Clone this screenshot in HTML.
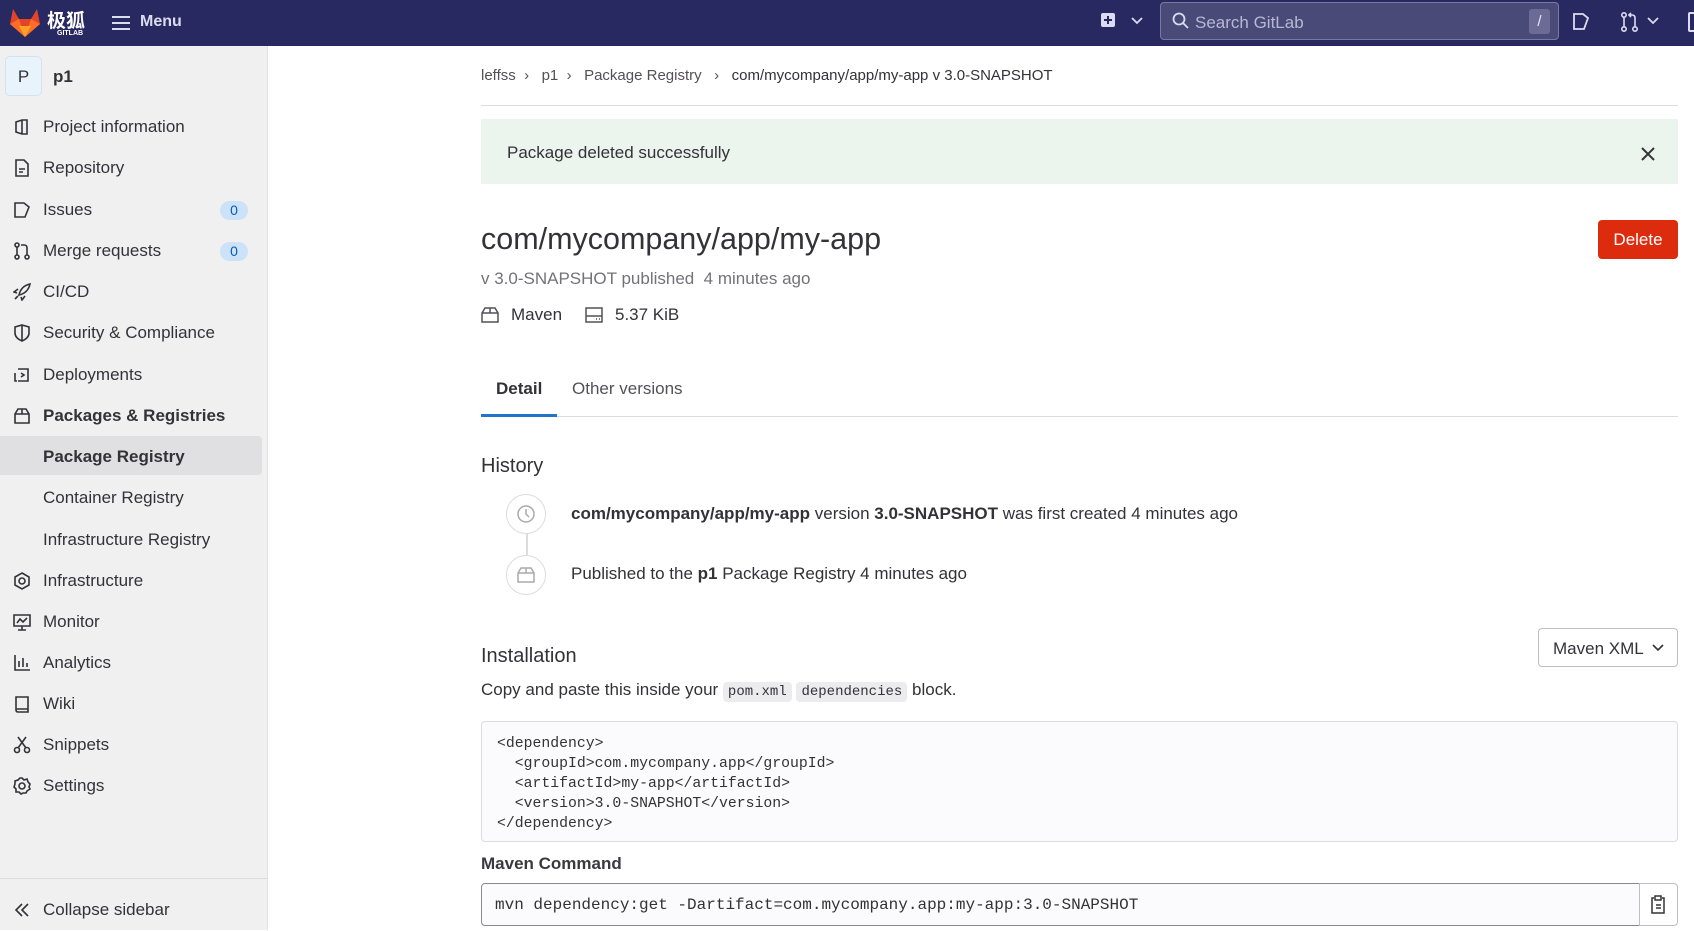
<!DOCTYPE html>
<html><head><meta charset="utf-8"><style>
*{box-sizing:border-box;margin:0;padding:0}
body{width:1694px;height:930px;overflow:hidden;background:#fff;font-family:"Liberation Sans","Noto Sans CJK SC",sans-serif;color:#333238;position:relative;font-size:17px}
.a{position:absolute;white-space:nowrap}
.hdr{position:absolute;left:0;top:0;width:1694px;height:46px;background:#292961}
.sb{position:absolute;left:0;top:46px;width:268px;height:884px;background:#f0f0f0;border-right:1px solid #e3e3e3}
.ni{position:absolute;left:0;width:268px;height:40px;line-height:42px}
.ni svg{position:absolute;left:13px;top:12px}
.ni span{position:absolute;left:43px}
.badge{position:absolute;left:220px;top:12px;width:28px;height:19px;border-radius:10px;background:#cbe2f9;color:#0b5cad;font-size:14px;line-height:19px;text-align:center}
.mono{font-family:"Liberation Mono",monospace}
.ic{fill:none;stroke:#333238;stroke-width:1.6}
</style></head><body>
<div class="hdr">
  <svg class="a" style="left:8px;top:6px" width="34" height="32" viewBox="0 0 34 32"><path d="M17 31 L2 18 L5 3 L11 13 L23 13 L29 3 L32 18 Z" fill="#e24329"/><path d="M17 31 L2 18 L11 13Z" fill="#fc6d26"/><path d="M17 31 L32 18 L23 13Z" fill="#fc6d26"/><path d="M17 31 L11 20 L23 20Z" fill="#fca326"/></svg>
  <div class="a" style="left:47px;top:6px;color:#fff;font-size:19px;font-weight:bold;font-family:'Noto Sans CJK SC',sans-serif">极狐</div>
  <div class="a" style="left:57px;top:30px;color:#fff;font-size:7px;font-weight:bold">GITLAB</div>
  <svg class="a" style="left:111px;top:14px" width="20" height="18"><path d="M1 3H19M1 9H19M1 15H19" stroke="#dcdcf0" stroke-width="2"/></svg>
  <div class="a" style="left:140px;top:13px;color:#dcdcf0;font-size:16px;font-weight:bold">Menu</div>
  <svg class="a" style="left:1100px;top:12px" width="16" height="16"><rect x="1" y="1" width="14" height="14" rx="2" fill="#dcdcf0"/><path d="M8 4V12M4 8H12" stroke="#292961" stroke-width="2"/></svg>
  <svg class="a" style="left:1131px;top:17px" width="12" height="8"><path d="M1 1L6 6L11 1" stroke="#dcdcf0" stroke-width="1.8" fill="none"/></svg>
  <div class="a" style="left:1160px;top:2px;width:399px;height:38px;background:#4a4a78;border:1px solid #7a7aa0;border-radius:4px"></div>
  <svg class="a" style="left:1172px;top:12px" width="18" height="18"><circle cx="7" cy="7" r="5.5" stroke="#dcdcf0" stroke-width="1.8" fill="none"/><path d="M11 11L16 16" stroke="#dcdcf0" stroke-width="1.8"/></svg>
  <div class="a" style="left:1195px;top:13px;color:#b8b8d4;font-size:17px">Search GitLab</div>
  <div class="a" style="left:1529px;top:9px;width:21px;height:25px;background:#6b6b95;border-radius:3px;color:#e8e8ff;font-size:15px;text-align:center;line-height:25px">/</div>
  <svg class="a" style="left:1572px;top:12px" width="20" height="20"><path d="M2 2H11L16 6L12 17H2Z" stroke="#dcdcf0" stroke-width="1.8" fill="none"/></svg>
  <svg class="a" style="left:1620px;top:11px" width="20" height="22"><circle cx="4" cy="4" r="2.2" stroke="#dcdcf0" stroke-width="1.6" fill="none"/><circle cx="4" cy="18" r="2.2" stroke="#dcdcf0" stroke-width="1.6" fill="none"/><circle cx="15" cy="18" r="2.2" stroke="#dcdcf0" stroke-width="1.6" fill="none"/><path d="M4 6V16M15 16V7Q15 4 12 4H9M11 2L9 4L11 6" stroke="#dcdcf0" stroke-width="1.6" fill="none"/></svg>
  <svg class="a" style="left:1647px;top:17px" width="12" height="8"><path d="M1 1L6 6L11 1" stroke="#dcdcf0" stroke-width="1.8" fill="none"/></svg>
  <div class="a" style="left:1688px;top:12px;width:10px;height:20px;border:2px solid #dcdcf0;border-radius:2px"></div>
</div>

<div class="sb">
  <div class="a" style="left:5px;top:10px;width:37px;height:40px;background:#e9f3fc;border:1px solid #d5e3f0;border-radius:5px;text-align:center;line-height:40px;font-size:17px">P</div>
  <div class="a" style="left:53px;top:21px;font-size:17px;font-weight:bold">p1</div>
  <div class="ni" style="top:60px"><svg width="18" height="18" class="ic"><path d="M3 4L9 2H14V16H9L3 14Z M9 2V16"/></svg><span>Project information</span></div>
  <div class="ni" style="top:101px"><svg width="18" height="18" class="ic"><path d="M3 1H11L15 5V17H3Z M6 10H12M6 13H10"/></svg><span>Repository</span></div>
  <div class="ni" style="top:143px"><svg width="18" height="18" class="ic"><path d="M2 2H11L16 6L12 16H2Z"/></svg><span>Issues</span><div class="badge">0</div></div>
  <div class="ni" style="top:184px"><svg width="18" height="18" class="ic"><circle cx="4" cy="3" r="2"/><circle cx="4" cy="15" r="2"/><circle cx="14" cy="15" r="2"/><path d="M4 5V13M14 13V6Q14 3 11 3H8"/></svg><span>Merge requests</span><div class="badge">0</div></div>
  <div class="ni" style="top:225px"><svg width="18" height="18" class="ic"><path d="M6 12Q8 3 17 1Q15 10 6 12ZM4 10L1 9L5 6M8 14L9 17L12 13M5 13L2 16"/></svg><span>CI/CD</span></div>
  <div class="ni" style="top:266px"><svg width="18" height="18" class="ic"><path d="M9 1L16 3V9Q16 14 9 17Q2 14 2 9V3Z M9 1V17"/></svg><span>Security &amp; Compliance</span></div>
  <div class="ni" style="top:308px"><svg width="18" height="18" class="ic"><path d="M5 3H15V15H5M2 7V15H4M8 7L11 9L8 11"/></svg><span>Deployments</span></div>
  <div class="ni" style="top:349px;font-weight:bold"><svg width="18" height="18" class="ic"><path d="M2 7L5 2H13L16 7V16H2Z M2 7H16 M9 2V7"/></svg><span>Packages &amp; Registries</span></div>
  <div class="a" style="left:0;top:390px;width:262px;height:39px;background:#e0e0e2;border-radius:0 4px 4px 0"></div>
  <div class="ni" style="top:390px;font-weight:bold"><span>Package Registry</span></div>
  <div class="ni" style="top:431px"><span>Container Registry</span></div>
  <div class="ni" style="top:473px"><span>Infrastructure Registry</span></div>
  <div class="ni" style="top:514px"><svg width="18" height="18" class="ic"><path d="M9 1L16 5V13L9 17L2 13V5Z"/><circle cx="9" cy="9" r="3"/></svg><span>Infrastructure</span></div>
  <div class="ni" style="top:555px"><svg width="18" height="18" class="ic"><path d="M1 2H17V13H1Z M5 17H13M9 13V17M4 10L7 6L10 9L14 5"/></svg><span>Monitor</span></div>
  <div class="ni" style="top:596px"><svg width="18" height="18" class="ic"><path d="M2 1V16H17M6 13V7M10 13V4M14 13V9"/></svg><span>Analytics</span></div>
  <div class="ni" style="top:637px"><svg width="18" height="18" class="ic"><path d="M3 2H15V17H5Q3 17 3 15Z M3 14H15"/></svg><span>Wiki</span></div>
  <div class="ni" style="top:678px"><svg width="18" height="18" class="ic"><circle cx="4" cy="14" r="2.5"/><circle cx="14" cy="14" r="2.5"/><path d="M5 12L13 1M13 12L5 1"/></svg><span>Snippets</span></div>
  <div class="ni" style="top:719px"><svg width="18" height="18" class="ic"><circle cx="9" cy="9" r="3"/><path d="M9 1L11 3L14 2L15 5L17 7L16 10L17 12L14 14L13 16L10 16L8 17L6 15L3 15L3 12L1 10L2 7L2 4L5 3L7 1Z"/></svg><span>Settings</span></div>
  <div class="a" style="left:0;top:832px;width:268px;border-top:1px solid #dcdcdc"></div>
  <div class="ni" style="top:843px"><svg width="18" height="18" class="ic"><path d="M9 3L3 9L9 15M15 3L9 9L15 15"/></svg><span>Collapse sidebar</span></div>
</div>

<div class="a" style="left:481px;top:67px;font-size:15px;color:#535158">leffss&nbsp;&nbsp;›&nbsp;&nbsp;&nbsp;p1&nbsp;&nbsp;›&nbsp;&nbsp;&nbsp;Package Registry&nbsp;&nbsp;&nbsp;›&nbsp;&nbsp;&nbsp;<span style="color:#333238">com/mycompany/app/my-app v 3.0-SNAPSHOT</span></div>
<div class="a" style="left:481px;top:105px;width:1197px;border-top:1px solid #dcdcde"></div>
<div class="a" style="left:481px;top:119px;width:1197px;height:65px;background:#ecf4ee"></div>
<div class="a" style="left:507px;top:143px;font-size:17px">Package deleted successfully</div>
<svg class="a" style="left:1641px;top:147px" width="14" height="14"><path d="M1 1L13 13M13 1L1 13" stroke="#333" stroke-width="2"/></svg>

<div class="a" style="left:481px;top:222px;font-size:30.5px;color:#333238">com/mycompany/app/my-app</div>
<div class="a" style="left:1598px;top:220px;width:80px;height:39px;background:#dd2b0e;border-radius:4px;color:#fff;font-size:17px;text-align:center;line-height:40px">Delete</div>
<div class="a" style="left:481px;top:269px;font-size:17px;color:#737278">v 3.0-SNAPSHOT published&nbsp;&nbsp;4 minutes ago</div>
<svg class="a" style="left:481px;top:306px" width="18" height="18"><path d="M1 7L4 2H14L17 7V16H1Z M1 7H17 M9 2V7" fill="none" stroke="#535158" stroke-width="1.5"/></svg>
<div class="a" style="left:511px;top:305px;font-size:17px">Maven</div>
<svg class="a" style="left:585px;top:306px" width="18" height="18"><path d="M1 2H17V16H1Z M1 10H17" fill="none" stroke="#535158" stroke-width="1.5"/><path d="M11 13H12M14 13H15" stroke="#535158" stroke-width="1.5"/></svg>
<div class="a" style="left:615px;top:305px;font-size:17px">5.37 KiB</div>

<div class="a" style="left:496px;top:379px;font-size:17px;font-weight:bold">Detail</div>
<div class="a" style="left:572px;top:379px;font-size:17px;color:#535158">Other versions</div>
<div class="a" style="left:481px;top:416px;width:1197px;border-top:1px solid #dcdcde"></div>
<div class="a" style="left:481px;top:414px;width:76px;height:3px;background:#1f75cb"></div>

<div class="a" style="left:481px;top:455px;font-size:20px">History</div>
<div class="a" style="left:526px;top:533px;height:24px;border-left:2px solid #dcdcde"></div>
<div class="a" style="left:506px;top:494px;width:40px;height:40px;border:1px solid #dcdcde;border-radius:50%;background:#fff"></div>
<svg class="a" style="left:516px;top:504px" width="20" height="20"><circle cx="10" cy="10" r="8" fill="none" stroke="#aaa" stroke-width="1.5"/><path d="M10 5V10L13 13" fill="none" stroke="#aaa" stroke-width="1.5"/></svg>
<div class="a" style="left:506px;top:555px;width:40px;height:40px;border:1px solid #dcdcde;border-radius:50%;background:#fff"></div>
<svg class="a" style="left:517px;top:566px" width="18" height="18"><path d="M1 7L4 2H14L17 7V16H1Z M1 7H17 M9 2V7" fill="none" stroke="#aaa" stroke-width="1.5"/></svg>
<div class="a" style="left:571px;top:504px;font-size:17px"><b>com/mycompany/app/my-app</b> version <b>3.0-SNAPSHOT</b> was first created 4 minutes ago</div>
<div class="a" style="left:571px;top:564px;font-size:17px">Published to the <b>p1</b> Package Registry 4 minutes ago</div>

<div class="a" style="left:481px;top:645px;font-size:20px">Installation</div>
<div class="a" style="left:1538px;top:628px;width:140px;height:39px;border:1px solid #bfbfc3;border-radius:4px;font-size:17px;line-height:39px;padding-left:14px">Maven XML</div>
<svg class="a" style="left:1652px;top:644px" width="12" height="8"><path d="M1 1L6 6L11 1" stroke="#333" stroke-width="1.6" fill="none"/></svg>
<div class="a" style="left:481px;top:680px;font-size:17px">Copy and paste this inside your <span class="mono" style="background:#ececef;border-radius:4px;padding:2px 5px;font-size:14px">pom.xml</span> <span class="mono" style="background:#ececef;border-radius:4px;padding:2px 5px;font-size:14px">dependencies</span> block.</div>
<div class="a mono" style="left:481px;top:721px;width:1197px;height:121px;background:#fbfafd;border:1px solid #dcdcde;border-radius:4px;padding:12px 15px;font-size:14.8px;line-height:20px;white-space:pre;color:#333">&lt;dependency&gt;
  &lt;groupId&gt;com.mycompany.app&lt;/groupId&gt;
  &lt;artifactId&gt;my-app&lt;/artifactId&gt;
  &lt;version&gt;3.0-SNAPSHOT&lt;/version&gt;
&lt;/dependency&gt;</div>
<div class="a" style="left:481px;top:854px;font-size:17px;font-weight:bold;color:#3a3940">Maven Command</div>
<div class="a mono" style="left:481px;top:883px;width:1159px;height:43px;background:#fbfafd;border:1px solid #89888d;border-radius:4px 0 0 4px;padding-left:13px;line-height:43px;font-size:16px;color:#333">mvn dependency:get -Dartifact=com.mycompany.app:my-app:3.0-SNAPSHOT</div>
<div class="a" style="left:1639px;top:883px;width:39px;height:43px;border:1px solid #bfbfc3;border-radius:0 4px 4px 0"></div>
<svg class="a" style="left:1650px;top:895px" width="18" height="20"><path d="M4 3H2V18H14V3H12M5 1H11V5H5Z M6 10H11M6 13H11" fill="none" stroke="#333" stroke-width="1.5"/></svg>
</body></html>
